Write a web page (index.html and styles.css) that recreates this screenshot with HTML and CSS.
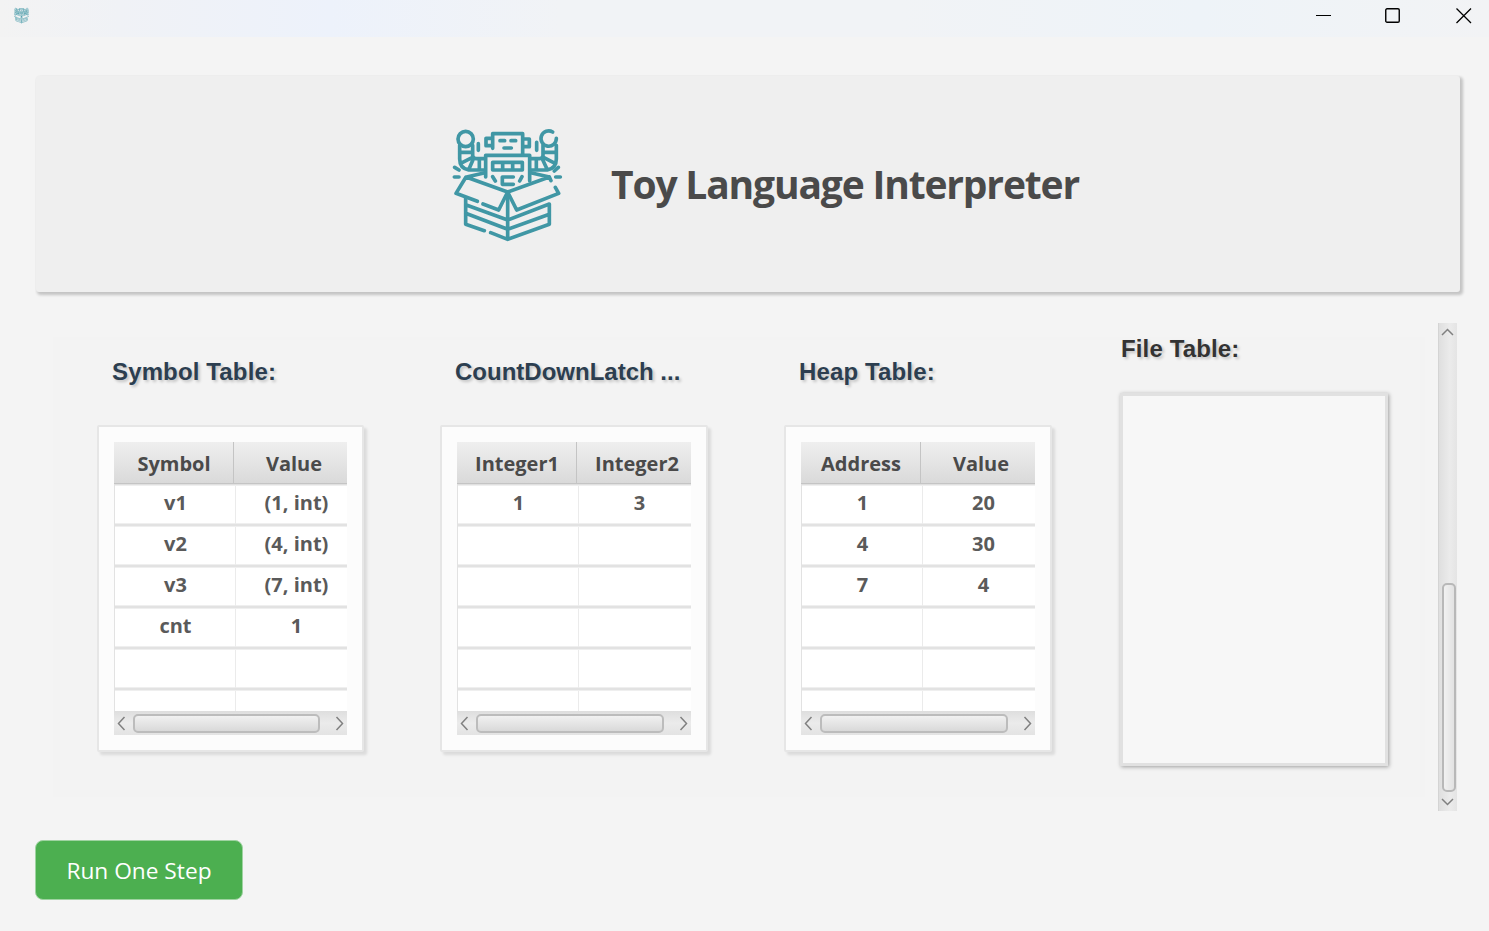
FILE: index.html
```html
<!DOCTYPE html>
<html lang="en">
<head>
<meta charset="utf-8">
<title>Toy Language Interpreter</title>
<link rel="stylesheet" href="styles.css">
</head>
<body>
<header class="titlebar">
  <svg class="app-icon" viewBox="36 42 332 338"><use href="#robot"/></svg>
  <div class="window-controls">
    <svg width="16" height="16" viewBox="0 0 16 16"><path d="M1 7.5H16" stroke="#000" stroke-width="1"/></svg>
    <svg width="16" height="16" viewBox="0 0 16 16"><rect x=".75" y=".75" width="13.5" height="13.5" rx="1.3" fill="none" stroke="#000" stroke-width="1.4"/></svg>
    <svg width="16" height="16" viewBox="0 0 16 16"><path d="M.5 .5L15 15M15 .5L.5 15" stroke="#000" stroke-width="1.3"/></svg>
  </div>
</header>

<section class="banner">
  <svg class="logo" viewBox="0 0 420 420">
    <g id="robot" fill="none" stroke="#4097a5" stroke-width="11" stroke-linecap="round" stroke-linejoin="round">
      <circle cx="77" cy="72" r="23"/>
      <path d="M338 51A23 23 0 1 0 349 70"/>
      <path d="M59 91V132Q59 160 86 165H134M98 91V122Q100 130 108 131H134M59 112H98M62 145L96 128M86 164L100 132M118 132V164"/>
      <path d="M349 91V132Q349 160 322 165H272M309 91V122Q307 130 299 131H272M349 112H309M345 145L312 128M322 164L307 132M289 132V164"/>
      <path d="M115 86V106M290 82V106"/>
      <path d="M158 100V56H248V118M158 70H138V92H158M248 72H268V95H248"/>
      <path d="M180 77H194M213 77H227M192 99H214"/>
      <path d="M137 186V121H269V197"/>
      <path d="M158 142H247V165H158ZM188 142V165M218 142V165"/>
      <path d="M158 185L166 198M246 185L239 198M220 186H187V208H220"/>
      <path d="M44 157L57 165M43 186H57M355 157L343 168M347 186H361"/>
      <path d="M112 259L48 235L78 186L203 231L176 285L129 267M80 186L135 173M272 173L328 186L333 197M203 231L328 186M346 217L356 235L230 285L203 231"/>
      <path d="M77 248V328L133 347M152 353L203 373L328 328V267L203 315L77 269M77 295L203 343L328 298M203 233V373"/>
    </g>
  </svg>
  <h1 class="title">Toy Language Interpreter</h1>
</section>

<main class="scroll-pane">
  <div class="panel">
    <section class="group">
      <h2 class="label">Symbol Table:</h2>
      <div class="card">
        <div class="table">
          <div class="head"><span>Symbol</span><span>Value</span></div>
          <div class="rows">
            <div class="row"><span>v1</span><span>(1, int)</span></div>
            <div class="row"><span>v2</span><span>(4, int)</span></div>
            <div class="row"><span>v3</span><span>(7, int)</span></div>
            <div class="row"><span>cnt</span><span>1</span></div>
            <div class="row"><span></span><span></span></div>
            <div class="row"><span></span><span></span></div>
          </div>
          <div class="hbar">
            <svg width="9" height="15" viewBox="0 0 9 15"><path d="M7.5 1L1.5 7.5L7.5 14"/></svg>
            <div class="hthumb"></div>
            <svg width="9" height="15" viewBox="0 0 9 15"><path d="M1.5 1L7.5 7.5L1.5 14"/></svg>
          </div>
        </div>
      </div>
    </section>
    <section class="group wide">
      <h2 class="label tight">CountDownLatch ...</h2>
      <div class="card">
        <div class="table">
          <div class="head"><span>Integer1</span><span>Integer2</span></div>
          <div class="rows">
            <div class="row"><span>1</span><span>3</span></div>
            <div class="row"><span></span><span></span></div>
            <div class="row"><span></span><span></span></div>
            <div class="row"><span></span><span></span></div>
            <div class="row"><span></span><span></span></div>
            <div class="row"><span></span><span></span></div>
          </div>
          <div class="hbar">
            <svg width="9" height="15" viewBox="0 0 9 15"><path d="M7.5 1L1.5 7.5L7.5 14"/></svg>
            <div class="hthumb"></div>
            <svg width="9" height="15" viewBox="0 0 9 15"><path d="M1.5 1L7.5 7.5L1.5 14"/></svg>
          </div>
        </div>
      </div>
    </section>
    <section class="group wide">
      <h2 class="label">Heap Table:</h2>
      <div class="card">
        <div class="table">
          <div class="head"><span>Address</span><span>Value</span></div>
          <div class="rows">
            <div class="row"><span>1</span><span>20</span></div>
            <div class="row"><span>4</span><span>30</span></div>
            <div class="row"><span>7</span><span>4</span></div>
            <div class="row"><span></span><span></span></div>
            <div class="row"><span></span><span></span></div>
            <div class="row"><span></span><span></span></div>
          </div>
          <div class="hbar">
            <svg width="9" height="15" viewBox="0 0 9 15"><path d="M7.5 1L1.5 7.5L7.5 14"/></svg>
            <div class="hthumb"></div>
            <svg width="9" height="15" viewBox="0 0 9 15"><path d="M1.5 1L7.5 7.5L1.5 14"/></svg>
          </div>
        </div>
      </div>
    </section>
    <section class="files">
      <h2 class="label dark">File Table:</h2>
      <div class="file-list"></div>
    </section>
  </div>
  <div class="vbar">
    <svg width="13" height="8" viewBox="0 0 13 8"><path d="M1 7L6.5 1.5L12 7"/></svg>
    <div class="vthumb"></div>
    <svg width="13" height="8" viewBox="0 0 13 8"><path d="M1 1L6.5 6.5L12 1"/></svg>
  </div>
</main>

<button class="run">Run One Step</button>
</body>
</html>
```
FILE: styles.css
```css
* { box-sizing: border-box; }
body {
  margin: 0;
  height: 931px;
  overflow: hidden;
  background: #f4f4f4;
  font-family: "Open Sans", "Noto Sans", sans-serif;
}
svg { display: block; flex: none; }
h1, h2 { margin: 0; white-space: nowrap; }

.titlebar {
  height: 37px;
  display: flex;
  justify-content: space-between;
  padding: 7px 17px 0 14px;
  background: linear-gradient(90deg, #f3f3f3 0, #f0f2f6 120px, #edf2fb 330px, #f1f3f6 560px, #f1f3f6 900px, #eef3f8 1200px, #f2f3f5 1489px);
}
.app-icon { width: 15px; height: 17px; }
.window-controls { display: flex; gap: 54px; padding-top: 1px; }
.window-controls svg:last-child { margin-left: 1px; }

.banner {
  display: flex;
  align-items: flex-start;
  width: 1424px;
  height: 216px;
  margin: 39px 0 0 36px;
  padding: 39px 0 0 404px;
  border-radius: 3px;
  background: #efefef;
  box-shadow: 2px 2px 3px 1px rgba(0, 0, 0, .2);
  clip-path: inset(-1px -8px -8px -1px);
}
.logo { width: 140px; height: 140px; }
.title {
  margin-left: 31px;
  line-height: 54px;
  padding-top: 42px;
  font-size: 39px;
  font-weight: 700;
  letter-spacing: -1.17px;
  color: #4a4a4a;
}

.scroll-pane {
  display: flex;
  justify-content: space-between;
  align-items: flex-start;
  height: 488px;
  margin: 31px 32px 0 53px;
}
.panel {
  display: flex;
  width: 1372px;
  height: 460px;
  margin-top: 14px;
  padding-left: 44px;
  background: #f3f3f3;
}
.group { width: 267px; margin-right: 76px; padding-top: 19px; }
.group.wide { width: 268px; }
.label {
  padding-left: 15px;
  font: 700 24px/32px "Liberation Sans", Arial, sans-serif;
  letter-spacing: .14px;
  color: #2c3e50;
  text-shadow: 2px 2px 3px rgba(0, 0, 0, .2);
}
.label.tight { letter-spacing: 0; }
.label.dark { color: #333; padding-left: 0; }
.card {
  height: 327px;
  margin-top: 37px;
  padding: 15px;
  border: 2px solid #e6e6e6;
  border-radius: 2px;
  background: #fcfcfc;
  box-shadow: 3px 3px 3px rgba(0, 0, 0, .1);
}
.table { height: 293px; overflow: hidden; }
.head {
  display: flex;
  height: 43px;
  border-bottom: 1px solid #e0e0e0;
  background: linear-gradient(#efefef, #d9d9d9);
  box-shadow: inset 0 -1px #c4c4c4;
}
.head span {
  flex: 0 0 120px;
  padding-left: 1px;
  text-align: center;
  font-size: 20px;
  line-height: 43px;
  font-weight: 700;
  color: #4a4a4a;
  border-right: 1px solid #c4c4c4;
}
.rows { height: 226px; overflow: hidden; border-left: 1px solid #e2e2e2; background: #fff; }
.row {
  display: flex;
  height: 41px;
  border-top: 1px solid #efefef;
  border-bottom: 2px solid #e2e2e2;
  box-shadow: inset 0 -1px #efefef;
}
.row span {
  flex: 0 0 121px;
  padding-left: 1px;
  text-align: center;
  font-size: 20px;
  line-height: 33px;
  font-weight: 700;
  color: #5a5a5a;
  border-right: 1px solid #ebebeb;
}
.hbar {
  display: flex;
  align-items: center;
  justify-content: space-between;
  height: 24px;
  padding: 0 3px 0 3px;
  background: linear-gradient(#dedede, #ebebeb 50%, #e3e3e3);
}
.hbar path, .vbar path { fill: none; stroke: #808080; stroke-width: 1.5; }
.hthumb {
  flex: 1;
  height: 19px;
  margin: 0 15px 0 7px;
  border: 2px solid #bcbcbc;
  border-radius: 5px;
  background: linear-gradient(#f1f1f1, #d9d9d9);
}
.files { width: 269px; margin: -4px 0 0 -8px; }
.files .label { padding-left: 1px; }
.file-list {
  width: 268px;
  height: 373px;
  margin-top: 28px;
  border: 3px solid #e1e1e1;
  background: #f7f7f7;
  box-shadow: 1px 1px 4px rgba(0, 0, 0, .35);
}
.vbar {
  display: flex;
  flex-direction: column;
  align-items: center;
  justify-content: space-between;
  width: 19px;
  height: 488px;
  padding: 5px 1px 5px 0;
  border-left: 1px solid #d4d4d4;
  background: linear-gradient(90deg, #dfdfdf, #ebebeb 60%, #e4e4e4);
}
.vthumb {
  width: 14px;
  height: 209px;
  margin: 240px 0 0 2px;
  border: 2px solid #b8b8b8;
  border-radius: 5px;
  background: linear-gradient(90deg, #f1f1f1, #e2e2e2);
}
.run {
  display: block;
  width: 208px;
  height: 60px;
  margin: 29px 0 0 35px;
  padding: 1px 0 0;
  border: 1px solid #9fd3a1;
  border-radius: 8px;
  background: #4caf50;
  color: #fff;
  font: 400 22.7px/57px "Open Sans", "Noto Sans", sans-serif;
}
```
